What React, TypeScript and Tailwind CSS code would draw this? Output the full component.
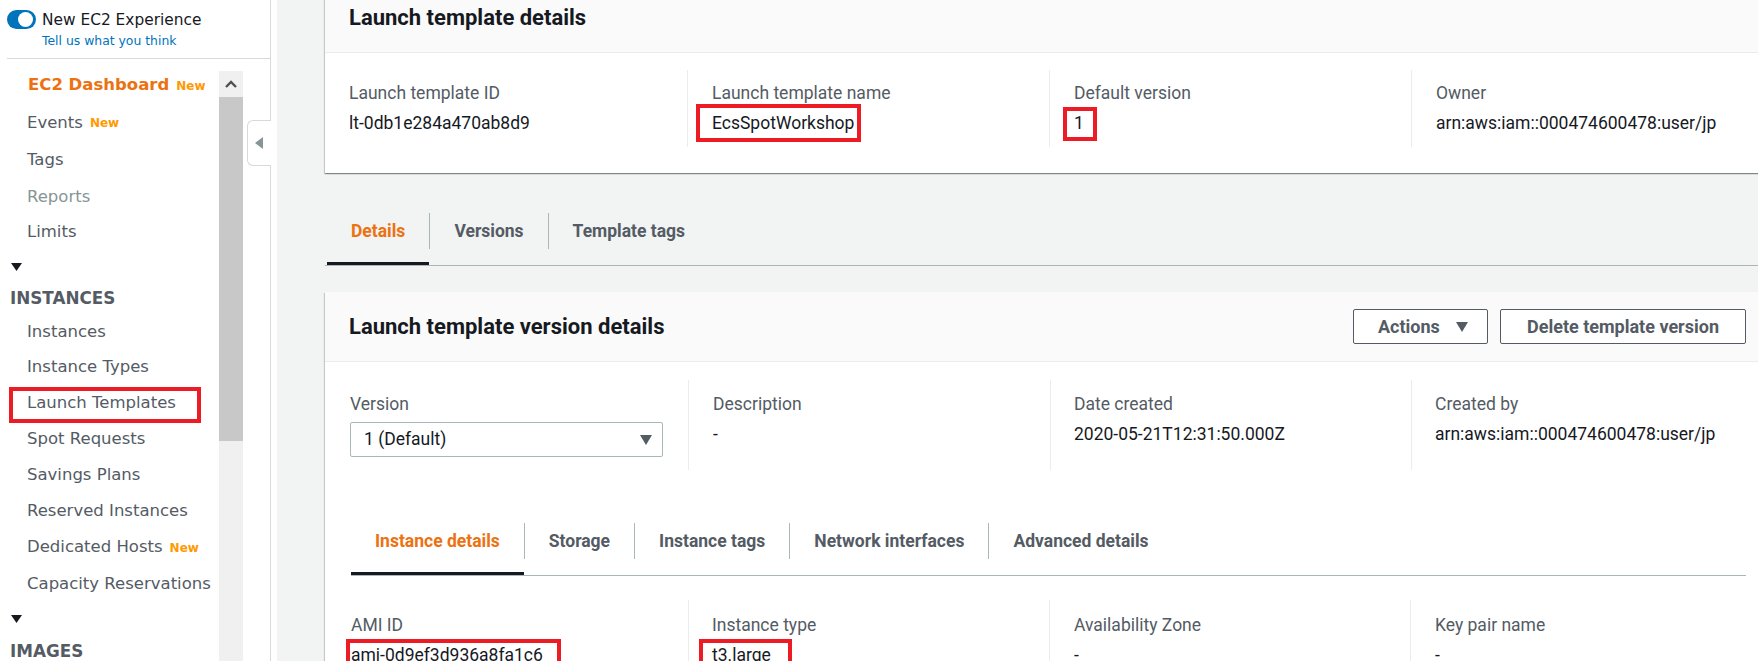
import React from 'react'

const side = "font-[family-name:'DejaVu_Sans',Verdana,sans-serif]"
const main = "font-[family-name:Roboto,'Liberation_Sans',sans-serif]"
const cardShadow = 'shadow-[0_1px_1px_0_rgba(0,28,36,0.3),1px_1px_1px_0_rgba(0,28,36,0.15),-1px_1px_1px_0_rgba(0,28,36,0.15)]'
const label = 'text-[17.5px] leading-[24px] text-[#545b64] whitespace-nowrap'
const value = 'mt-[6px] text-[17.5px] leading-[24px] text-[#16191f] whitespace-nowrap'

function Caret({ className = '' }: { className?: string }) {
  return (
    <svg width="12" height="10" viewBox="0 0 12 10" className={className}>
      <polygon points="0,0 12,0 6,10" fill="#545b64" />
    </svg>
  )
}

function SectionArrow() {
  return (
    <svg width="11" height="8" viewBox="0 0 11 8">
      <polygon points="0,0 11,0 5.5,8" fill="#16191f" />
    </svg>
  )
}

function New() {
  return <span className="ml-[7px] text-[12px] font-bold text-[#ff9900]">New</span>
}

function RedBox({ className }: { className: string }) {
  return <span className={`pointer-events-none absolute border-4 border-[#ed1c24] ${className}`} />
}

function NavLink({ h, children, muted }: { h: string; children: React.ReactNode; muted?: boolean }) {
  return (
    <div className={`relative flex items-center pl-[27px] whitespace-nowrap text-[16.5px] ${h} ${muted ? 'text-[#879596]' : 'text-[#545b64]'}`}>
      {children}
    </div>
  )
}

function Tab({ active, children }: { active?: boolean; children: React.ReactNode }) {
  return (
    <div
      className={`flex h-[68px] items-center border-b-[3px] px-[24px] pt-[3px] text-[17.5px] font-bold whitespace-nowrap ${
        active ? 'border-[#16191f] text-[#ec7211]' : 'border-transparent text-[#545b64]'
      }`}
    >
      {children}
    </div>
  )
}

function TabDivider() {
  return <span className="h-[36px] w-px self-center bg-[#aab7b8]" />
}

function Sidebar() {
  return (
    <aside className={`relative h-full w-[277px] shrink-0 bg-white ${side}`}>
      <div className="flex h-full w-[271px] flex-col border-r border-[#d5dbdb]">
        {/* new experience toggle */}
        <div className="ml-[7px] flex h-[59px] shrink-0 items-start border-b border-[#d5dbdb] pt-[10px]">
          <div className="relative h-[19px] w-[29px] shrink-0 rounded-full bg-[#0073bb]">
            <span className="absolute right-[3px] top-[2px] h-[15px] w-[15px] rounded-full bg-white" />
          </div>
          <div className="ml-[6px]">
            <div className="text-[15.4px] leading-[20px] text-[#16191f]">New EC2 Experience</div>
            <div className="mt-[3px] text-[12.4px] leading-[16px] text-[#0073bb]">Tell us what you think</div>
          </div>
        </div>

        <div className="flex min-h-0 flex-1">
          <nav className="flex-1 pt-[8px]">
            <div className="flex h-[37px] items-center pl-[28px] whitespace-nowrap text-[16.5px] font-bold text-[#ec7211]">
              EC2 Dashboard<New />
            </div>
            <NavLink h="h-[38px]">Events<New /></NavLink>
            <NavLink h="h-[37px]">Tags</NavLink>
            <NavLink h="h-[36px]" muted>Reports</NavLink>
            <NavLink h="h-[35px]">Limits</NavLink>
            <div className="flex h-[33px] items-center pl-[11px]"><SectionArrow /></div>
            <div className="flex h-[32px] items-center pl-[10px] text-[16.8px] font-bold text-[#545b64]">INSTANCES</div>
            <NavLink h="h-[34px]">Instances</NavLink>
            <NavLink h="h-[37px]">Instance Types</NavLink>
            <NavLink h="h-[35px]">
              Launch Templates
              <RedBox className="left-[9px] top-[1px] h-[36px] w-[192px]" />
            </NavLink>
            <NavLink h="h-[36px]">Spot Requests</NavLink>
            <NavLink h="h-[36px]">Savings Plans</NavLink>
            <NavLink h="h-[36px]">Reserved Instances</NavLink>
            <NavLink h="h-[37px]">Dedicated Hosts<New /></NavLink>
            <NavLink h="h-[36px]">Capacity Reservations</NavLink>
            <div className="flex h-[33px] items-center pl-[11px]"><SectionArrow /></div>
            <div className="flex h-[34px] items-center pl-[10px] text-[16.8px] font-bold text-[#545b64]">IMAGES</div>
          </nav>

          {/* scrollbar */}
          <div className="mr-[27px] mt-[12px] flex w-[24px] flex-col">
            <div className="flex h-[26px] items-center justify-center bg-[#f0f0f0]">
              <svg width="12" height="8" viewBox="0 0 12 8">
                <polyline points="1,7 6,2 11,7" fill="none" stroke="#505050" strokeWidth="2.4" />
              </svg>
            </div>
            <div className="h-[344px] bg-[#c8c8c8]" />
            <div className="flex-1 bg-[#f0f0f0]" />
          </div>
        </div>
      </div>

      {/* collapse handle */}
      <div className="absolute left-[247px] top-[120px] flex h-[46px] w-[24px] items-center rounded-l-[6px] border border-r-0 border-[#d5dbdb] bg-white pl-[7px]">
        <svg width="8" height="12" viewBox="0 0 8 12">
          <polygon points="8,0 8,12 0,6" fill="#879596" />
        </svg>
      </div>
    </aside>
  )
}

export default function App() {
  return (
    <div className="flex h-[661px] w-full overflow-hidden bg-[#f2f3f3]">
      <Sidebar />

      <main className={`min-w-0 flex-1 overflow-hidden pl-[48px] ${main}`}>
        <div className="w-[1446px]">
          {/* LAUNCH TEMPLATE DETAILS */}
          <section className={`-mt-[18px] bg-white ${cardShadow}`}>
            <div className="flex h-[71px] items-center border-b border-[#eaeded] bg-[#fafafa] pl-[24px]">
              <h2 className="text-[22px] font-bold text-[#16191f]">Launch template details</h2>
            </div>
            <div className="grid grid-cols-[362px_362px_362px_1fr] pb-[26px] pt-[17px]">
              <div className="pb-[12px] pl-[24px] pt-[11px]">
                <div className={label}>Launch template ID</div>
                <div className={value}>lt-0db1e284a470ab8d9</div>
              </div>
              <div className="border-l border-[#eaeded] pb-[12px] pl-[24px] pt-[11px]">
                <div className={label}>Launch template name</div>
                <div className={value}>
                  <span className="relative inline-block">
                    EcsSpotWorkshop
                    <RedBox className="-left-[16px] -top-[7px] h-[38px] w-[165px]" />
                  </span>
                </div>
              </div>
              <div className="border-l border-[#eaeded] pb-[12px] pl-[24px] pt-[11px]">
                <div className={label}>Default version</div>
                <div className={value}>
                  <span className="relative inline-block">
                    1
                    <RedBox className="-left-[11px] -top-[4px] h-[34px] w-[34px]" />
                  </span>
                </div>
              </div>
              <div className="border-l border-[#eaeded] pb-[12px] pl-[24px] pt-[11px]">
                <div className={label}>Owner</div>
                <div className={value}>arn:aws:iam::000474600478:user/jp</div>
              </div>
            </div>
          </section>

          {/* TABS */}
          <div className="mt-[24px] flex border-b border-[#aab7b8] pl-[2px]">
            <Tab active>Details</Tab>
            <TabDivider />
            <Tab>Versions</Tab>
            <TabDivider />
            <Tab>Template tags</Tab>
          </div>

          {/* VERSION DETAILS */}
          <section className={`mt-[26px] bg-white ${cardShadow}`}>
            <div className="flex h-[70px] items-center justify-between border-b border-[#eaeded] bg-[#fafafa] pl-[24px] pr-[25px]">
              <h2 className="text-[22px] font-bold text-[#16191f]">Launch template version details</h2>
              <div className="flex gap-[12px]">
                <button className="flex h-[35px] w-[135px] items-center gap-[16px] rounded-[2px] border border-[#545b64] bg-white pl-[24px] text-[18px] font-bold text-[#545b64]">
                  Actions <Caret />
                </button>
                <button className="flex h-[35px] w-[246px] items-center justify-center rounded-[2px] border border-[#545b64] bg-white text-[18px] font-bold text-[#545b64]">
                  Delete template version
                </button>
              </div>
            </div>

            <div className="grid grid-cols-[363px_362px_361px_1fr] pt-[18px]">
              <div className="pb-[13px] pl-[25px] pt-[12px]">
                <div className={label}>Version</div>
                <div className="mt-[6px] flex h-[35px] w-[313px] items-center justify-between rounded-[2px] border border-[#aab7b8] pl-[13px] pr-[10px] text-[17.5px] text-[#16191f]">
                  1 (Default)
                  <Caret />
                </div>
              </div>
              <div className="border-l border-[#eaeded] pb-[13px] pl-[24px] pt-[12px]">
                <div className={label}>Description</div>
                <div className={value}>-</div>
              </div>
              <div className="border-l border-[#eaeded] pb-[13px] pl-[23px] pt-[12px]">
                <div className={label}>Date created</div>
                <div className={value}>2020-05-21T12:31:50.000Z</div>
              </div>
              <div className="border-l border-[#eaeded] pb-[13px] pl-[23px] pt-[12px]">
                <div className={label}>Created by</div>
                <div className={value}>arn:aws:iam::000474600478:user/jp</div>
              </div>
            </div>

            <div className="pl-[26px] pr-[25px]">
              <div className="mt-[37px] flex border-b border-[#aab7b8]">
                <Tab active>Instance details</Tab>
                <TabDivider />
                <Tab>Storage</Tab>
                <TabDivider />
                <Tab>Instance tags</Tab>
                <TabDivider />
                <Tab>Network interfaces</Tab>
                <TabDivider />
                <Tab>Advanced details</Tab>
              </div>

              <div className="grid grid-cols-[337px_361px_361px_1fr] pb-[40px] pt-[24px]">
                <div className="pt-[13px]">
                  <div className={label}>AMI ID</div>
                  <div className={value}>
                    <span className="relative inline-block">
                      ami-0d9ef3d936a8fa1c6
                      <RedBox className="-left-[5px] -top-[4px] h-[40px] w-[215px]" />
                    </span>
                  </div>
                </div>
                <div className="border-l border-[#eaeded] pl-[23px] pt-[13px]">
                  <div className={label}>Instance type</div>
                  <div className={value}>
                    <span className="relative inline-block">
                      t3.large
                      <RedBox className="-left-[13px] -top-[4px] h-[40px] w-[93px]" />
                    </span>
                  </div>
                </div>
                <div className="border-l border-[#eaeded] pl-[24px] pt-[13px]">
                  <div className={label}>Availability Zone</div>
                  <div className={value}>-</div>
                </div>
                <div className="border-l border-[#eaeded] pl-[24px] pt-[13px]">
                  <div className={label}>Key pair name</div>
                  <div className={value}>-</div>
                </div>
              </div>
            </div>
          </section>
        </div>
      </main>
    </div>
  )
}
